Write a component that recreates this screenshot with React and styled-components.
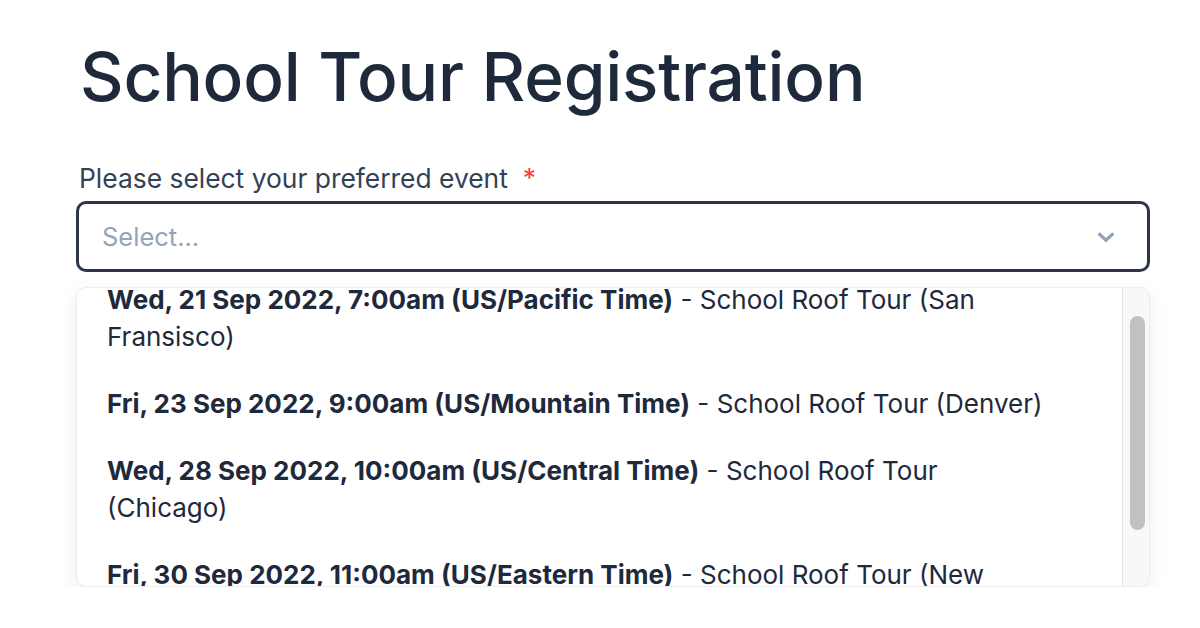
import React, { useEffect, useRef } from "react";
import styled, { createGlobalStyle } from "styled-components";

const GlobalStyle = createGlobalStyle`
  html, body {
    margin: 0;
    padding: 0;
    background: #ffffff;
  }
  body {
    font-family: Inter, "Noto Sans", sans-serif;
    color: #1e293b;
  }
`;

const Page = styled.main`
  width: 1074px;
  padding: 35px 0 0 76px;
`;

const Title = styled.h1`
  margin: 0 0 0 4px;
  font-size: 67.5px;
  line-height: 84px;
  font-weight: 500;
  color: #1e293b;
  letter-spacing: -0.2px;
`;

const Field = styled.div`
  display: flex;
  flex-direction: column;
  margin-top: 43px;
`;

const Label = styled.label`
  margin-left: 3px;
  font-size: 26.4px;
  line-height: 32px;
  color: #334155;
  display: flex;
  gap: 15px;
`;

const Required = styled.span`
  color: #ef4444;
`;

const SelectBox = styled.div`
  margin-top: 7px;
  height: 71px;
  box-sizing: border-box;
  border: 3px solid #2d3748;
  border-radius: 10px;
  display: flex;
  align-items: center;
  justify-content: space-between;
  padding: 0 30px 0 23px;
`;

const Placeholder = styled.span`
  font-size: 25.5px;
  color: #94a3b8;
`;

const Menu = styled.div`
  margin-top: 15px;
  height: 300px;
  box-sizing: border-box;
  border: 1px solid #ececec;
  border-radius: 10px;
  box-shadow: 0 6px 18px rgba(0, 0, 0, 0.08);
  overflow: hidden;
  background: #fff;
  display: flex;
`;

const MenuList = styled.ul`
  flex: 1;
  list-style: none;
  margin: 0;
  padding: 0 0 38px;
  height: 100%;
  box-sizing: border-box;
  overflow: hidden;
`;

const ScrollTrack = styled.div`
  width: 27px;
  flex-shrink: 0;
  background: #f8f8f8;
  border-left: 1px solid #e6e6e6;
  padding: 28px 4px 0 7px;
  box-sizing: border-box;
`;

const ScrollThumb = styled.div`
  height: 214px;
  border-radius: 8px;
  background: #c1c1c1;
`;

const Option = styled.li`
  padding: 15px 67px 15px 30px;
  font-size: 26px;
  line-height: 37px;
  color: #1e293b;
`;

const When = styled.strong`
  font-weight: 700;
`;

const events = [
  ["Wed, 21 Sep 2022, 7:00am (US/Pacific Time)", "School Roof Tour (San Fransisco)"],
  ["Fri, 23 Sep 2022, 9:00am (US/Mountain Time)", "School Roof Tour (Denver)"],
  ["Wed, 28 Sep 2022, 10:00am (US/Central Time)", "School Roof Tour (Chicago)"],
  ["Fri, 30 Sep 2022, 11:00am (US/Eastern Time)", "School Roof Tour (New York)"],
];

const Chevron = () => (
  <svg width="22" height="22" viewBox="0 0 24 24" fill="none" stroke="#94a3b8" strokeWidth="3.5" strokeLinecap="round" strokeLinejoin="round">
    <polyline points="5 9 12 15.5 19 9" />
  </svg>
);

export default function App() {
  const listRef = useRef(null);
  useEffect(() => {
    if (listRef.current) listRef.current.scrollTop = 22;
  }, []);

  return (
    <Page>
      <GlobalStyle />
      <Title>School Tour Registration</Title>
      <Field>
        <Label>
          Please select your preferred event <Required>*</Required>
        </Label>
        <SelectBox>
          <Placeholder>Select...</Placeholder>
          <Chevron />
        </SelectBox>
        <Menu>
          <MenuList ref={listRef}>
            {events.map(([when, what]) => (
              <Option key={when}>
                <When>{when}</When> - {what}
              </Option>
            ))}
          </MenuList>
          <ScrollTrack>
            <ScrollThumb />
          </ScrollTrack>
        </Menu>
      </Field>
    </Page>
  );
}
